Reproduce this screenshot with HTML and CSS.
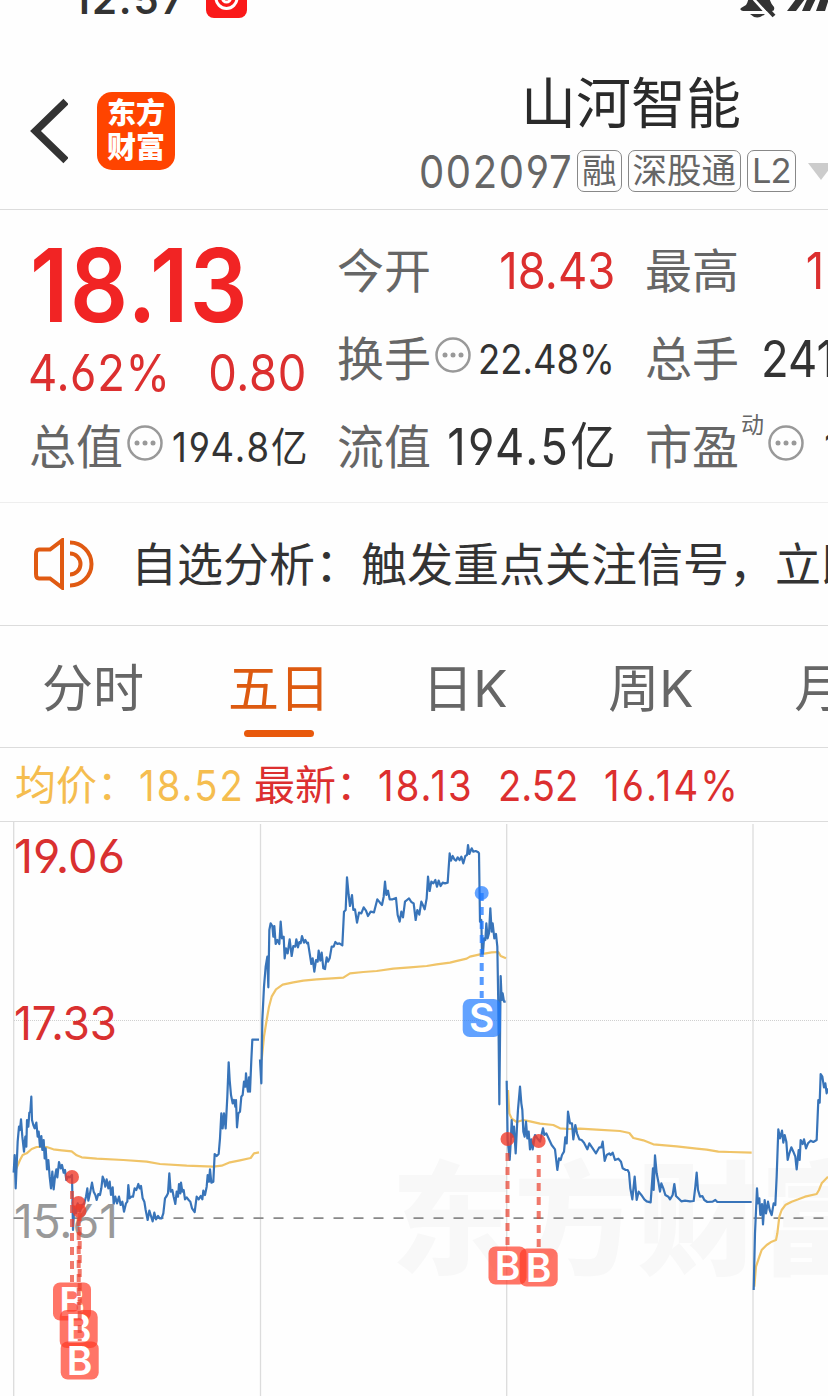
FILE: index.html
```
<!DOCTYPE html>
<html lang="zh-CN">
<head>
    <meta charset="utf-8">
    <title>山河智能 002097</title>
    <link rel="stylesheet" href="styles.css">
</head>
<body>
    <div class="status-bar">
        <span class="clock">12:57</span>
        <svg class="status-app" width="41" height="41" viewBox="0 0 41 41">
            <rect width="41" height="41" rx="8" fill="#fa1919"/>
            <circle cx="20.500" cy="21" r="10.500" fill="none" stroke="#fff" stroke-width="3"/>
            <circle cx="20.500" cy="21" r="4" fill="none" stroke="#fff" stroke-width="3"/>
        </svg>
        <svg class="status-icons" width="88" height="40" viewBox="0 0 88 40">
            <path d="M6 27 C11 20 8 3 18 2 C30 3 25 19 34 29 Q35 33 32 33 H3 Q-1 32 1 30 Z" fill="#333"/>
            <path d="M10 36 H25 Q17 43 10 36 Z" fill="#333"/>
            <path d="M3 9 L31 40" stroke="#fff" stroke-width="3"/>
            <path d="M5 7 L34 38" stroke="#333" stroke-width="4"/>
            <path d="M47 33 L59 17 H68 L56 33 Z M62 33 L72 10 H81 L70 33 Z M76 33 L86 5 H94 L85 33 Z" fill="#333"/>
        </svg>
    </div>

    <div class="header">
        <svg class="back" width="38" height="66" viewBox="0 0 38 66">
            <path d="M36 3.500 L5.500 33 L36 62.500" fill="none" stroke="#333" stroke-width="7.500" stroke-linejoin="miter"/>
        </svg>
        <div class="logo"><span>东方</span><span>财富</span></div>
        <div class="title">
            <div class="stock-name">山河智能</div>
            <div class="stock-info">
                <span class="code"><span class="num">002097</span></span>
                <span class="tag">融</span>
                <span class="tag">深股通</span>
                <span class="tag level">L2</span>
                <span class="arrow"></span>
            </div>
        </div>
    </div>

    <div class="quote">
        <div class="column">
            <div class="price"><span class="num">18.13</span></div>
            <div class="change"><span class="num">4.62%</span><span class="num right">0.80</span></div>
            <div class="stat">
                <span class="label">总值</span>
                <svg class="more" viewBox="0 0 36 36"><use href="#more"/></svg>
                <span class="value small num right wide">194.8亿</span>
            </div>
        </div>
        <div class="column">
            <div class="stat">
                <span class="label">今开</span>
                <span class="value num right red">18.43</span>
            </div>
            <div class="stat">
                <span class="label">换手</span>
                <svg class="more" viewBox="0 0 36 36"><use href="#more"/></svg>
                <span class="value small num right">22.48%</span>
            </div>
            <div class="stat">
                <span class="label">流值</span>
                <span class="value num right wide">194.5亿</span>
            </div>
        </div>
        <div class="column">
            <div class="stat">
                <span class="label">最高</span>
                <span class="value num right red wide">19.06</span>
            </div>
            <div class="stat">
                <span class="label">总手</span>
                <span class="value num right">241.4万</span>
            </div>
            <div class="stat">
                <span class="label">市盈<sup>动</sup></span>
                <svg class="more" viewBox="0 0 36 36"><use href="#more"/></svg>
                <span class="value small num right">114.31</span>
            </div>
        </div>
    </div>

    <div class="news">
        <svg class="speaker" width="62" height="52" viewBox="0 0 62 52">
            <path d="M5 11.500 H16 L28 2.500 V49.500 L16 40.500 H5 Q2 40.500 2 36 V16 Q2 11.500 5 11.500 Z"/>
            <path d="M36 4.500 A21.500 21.500 0 0 1 36 47.500 M36 15.500 A10.500 10.500 0 0 1 36 36.500"/>
        </svg>
        <span>自选分析：触发重点关注信号，立即查看</span>
    </div>

    <div class="tabs">
        <div class="tab">分时</div>
        <div class="tab active">五日</div>
        <div class="tab">日K</div>
        <div class="tab">周K</div>
        <div class="tab">月K</div>
    </div>

    <div class="legend">
        <span class="average">均价：</span>
        <span class="average num wide">18.52</span>
        <span>最新：</span>
        <span class="num wide">18.13</span>
        <span class="num">2.52</span>
        <span class="num wide">16.14%</span>
    </div>

    <svg class="chart" width="828" height="574" viewBox="0 822 828 574">
        <defs>
            <g id="more">
                <circle cx="18" cy="18" r="16.500" fill="none" stroke="#999" stroke-width="2.500"/>
                <circle cx="10" cy="18" r="2.500" fill="#999"/>
                <circle cx="18" cy="18" r="2.500" fill="#999"/>
                <circle cx="26" cy="18" r="2.500" fill="#999"/>
            </g>
            <g id="buy">
                <rect x="-19" y="-19" width="38" height="38" rx="7"/>
                <text y="14" text-anchor="middle">B</text>
            </g>
        </defs>

        <text class="watermark" x="391" y="1265">东方财富</text>

        <!-- grid -->
        <path class="grid" d="M13.700 822 V1396 M260.500 824 V1396 M506.700 824 V1396 M753 824 V1396"/>
        <path class="grid-dotted" d="M14 1020.500 H828"/>
        <path class="base-line" d="M13.500 1218.200 H828"/>

        <!-- day 1 -->
        <g transform="translate(0 1080) scale(.33333)">
            <polyline class="avg" points="47,270 60,240 68,225 80,220 95,207 110,201 140,201 160,208 185,211 215,214 230,226 245,232 290,236 370,240 440,245 480,252 560,257 640,260 665,257 690,247 720,241 752,234 762,220 777,217"/>
            <polyline class="line" points="41,278 44,225 47,325 53,185 57,140 60,150 63,118 67,170 72,215 76,170 79,200 81,120 85,140 88,98 91,95 94,50 96,120 100,135 104,145 109,128 113,170 116,155 120,200 124,168 127,210 131,180 134,235 137,205 141,268 145,240 149,290 153,325 157,275 161,328 165,290 169,268 172,292 177,246 182,265 186,255 191,278 195,270 199,300 204,290 210,292 216,285 219,450 223,380 228,400 233,370 240,395 246,375 252,372 258,350 262,325 265,362 270,340 276,308 281,335 286,345 290,360 295,342 300,345 304,325 308,290 312,300 316,320 320,298 325,325 329,305 333,345 338,322 341,372 346,350 351,370 357,350 362,375 367,365 372,395 378,370 382,365 385,315 389,355 394,350 399,350 404,325 409,330 415,312 419,325 423,318 428,355 433,365 437,390 443,420 448,392 452,405 458,424 463,398 468,418 474,408 479,415 485,415 490,400 495,355 500,348 504,340 508,280 512,335 517,330 521,350 526,372 530,335 534,350 537,312 541,340 543,308 547,335 551,330 555,358 560,352 566,360 571,365 576,385 584,396 590,350 596,358 602,348 607,358 610,332 615,345 620,320 623,285 627,305 630,268 634,308 640,305 644,222 650,228 656,222 660,175 664,100 668,145 672,100 677,145 682,50 686,-53 689,0 693,45 698,70 702,60 706,80 708,60 711,142 715,100 720,95 724,50 728,45 732,5 736,20 738,-20 741,15 744,35 747,-8 750,35 754,-60 757,-121 777,-121"/>
        </g>

        <!-- day 2 -->
        <g transform="translate(250 820) scale(.33333)">
            <polyline class="avg" points="35,720 42,650 50,600 57,560 65,530 78,508 98,494 130,487 160,482 200,478 280,473 300,460 340,456 380,453 430,446 480,442 530,438 560,433 600,428 615,424 650,416 660,410 690,403 725,397 745,396 752,408 768,415"/>
            <polyline class="line" points="30,718 34,790 37,600 42,500 47,440 52,410 55,502 58,330 62,310 67,318 70,350 73,318 77,372 82,360 88,372 92,305 96,355 101,350 104,415 108,385 113,400 119,358 125,408 130,378 136,380 139,358 144,382 148,366 152,370 156,348 162,368 166,360 171,370 174,368 179,400 184,432 188,415 193,455 198,420 203,425 206,392 211,422 215,398 220,445 225,447 230,412 234,425 239,415 245,380 251,380 256,366 262,372 268,370 277,376 282,275 287,270 291,172 296,225 300,258 306,225 310,270 315,268 321,308 327,278 334,280 341,262 348,272 354,288 362,275 372,277 382,238 390,248 396,255 401,230 405,185 409,225 414,212 419,238 428,238 438,234 443,285 449,305 454,275 459,292 465,245 471,240 477,235 484,246 491,250 497,300 502,270 508,284 514,245 520,258 524,268 530,235 534,170 539,213 544,185 550,190 556,180 561,200 566,182 572,198 578,188 585,190 593,188 599,100 603,122 608,108 613,118 618,122 623,112 629,120 634,110 640,130 646,108 651,105 654,75 658,102 665,85 670,95 677,93 685,97 687,100 690,305 694,300 696,400 699,400 702,355 706,360 709,310 713,355 717,340 721,265 725,335 728,310 733,355 738,342 742,380 745,560 748,853 752,468 755,540 758,520 762,545 767,545"/>
        </g>

        <!-- day 3 -->
        <g transform="translate(440 1060) scale(.33333)">
            <polyline class="avg" points="204,90 208,160 215,176 230,186 250,180 270,184 300,191 340,195 360,205 385,207 420,206 470,209 540,213 568,219 580,234 610,241 640,253 710,259 770,266 800,269 835,275 870,276 935,278"/>
            <polyline class="line" points="200,62 203,240 209,300 212,250 215,180 218,230 222,200 227,280 231,200 234,148 240,80 244,130 247,150 250,215 254,230 258,185 262,235 266,215 270,268 274,238 278,268 285,225 292,235 300,245 309,205 313,225 319,220 328,240 335,255 345,268 352,330 357,295 362,300 366,285 372,275 376,232 380,250 384,155 390,190 396,190 400,238 406,195 411,220 418,238 425,240 432,248 442,268 448,250 456,262 468,280 478,262 484,262 488,245 494,303 500,285 508,280 512,285 518,278 525,300 535,296 543,305 548,325 557,330 563,330 567,338 571,385 577,418 584,350 590,420 596,395 604,405 613,418 620,424 632,427 639,325 641,390 645,286 650,340 655,365 660,395 664,370 670,385 676,405 685,410 690,418 698,405 703,372 708,408 718,418 724,424 735,422 750,424 761,423 766,380 770,338 774,390 780,410 787,408 793,420 802,426 818,425 826,420 832,426 935,426"/>
        </g>

        <!-- day 4 -->
        <g transform="translate(620 1060) scale(.33333)">
            <polyline class="avg" points="403,680 408,620 418,590 425,570 440,555 455,545 468,540 472,520 478,470 485,450 497,434 515,425 535,418 555,410 590,402 597,390 605,370 624,350"/>
            <polyline class="line" points="401,690 405,520 411,385 414,430 418,415 421,465 426,432 429,493 434,420 438,460 444,425 449,450 455,465 461,430 466,435 470,350 475,208 480,235 486,212 490,248 494,225 499,245 503,300 508,280 514,262 520,275 526,290 530,328 536,270 539,300 542,240 548,252 552,238 558,265 564,250 572,242 580,246 590,240 595,120 599,128 602,42 607,50 612,82 616,70 620,100 624,85"/>
        </g>

        <!-- price axis -->
        <text class="axis" x="14" y="873" textLength="111" lengthAdjust="spacingAndGlyphs">19.06</text>
        <text class="axis" x="14" y="1040" textLength="103" lengthAdjust="spacingAndGlyphs">17.33</text>
        <text class="axis base" x="14" y="1238" textLength="104" lengthAdjust="spacingAndGlyphs">15.61</text>

        <!-- sell point -->
        <g class="sell">
            <circle cx="481.700" cy="893" r="7"/>
            <path d="M481.700 893 V998"/>
            <rect x="462.700" y="999" width="38" height="38" rx="7"/>
            <text x="481.700" y="1032" text-anchor="middle">S</text>
        </g>

        <!-- buy points -->
        <g class="buy">
            <circle cx="72" cy="1177" r="7"/>
            <circle cx="78.500" cy="1203" r="7"/>
            <circle cx="79.500" cy="1211" r="7"/>
            <circle cx="507.500" cy="1139" r="7"/>
            <circle cx="538.700" cy="1141" r="7"/>
            <use href="#buy" x="72" y="1301.500"/>
            <path d="M72 1191 V1282"/>
            <use href="#buy" x="78.700" y="1329"/>
            <path d="M78.700 1204 V1310"/>
            <use href="#buy" x="79.700" y="1360.500"/>
            <path d="M79.700 1213 V1341"/>
            <use href="#buy" x="507.500" y="1265.500"/>
            <path d="M507.500 1153 V1247"/>
            <use href="#buy" x="538.700" y="1267.500"/>
            <path d="M538.700 1155 V1249"/>
        </g>
    </svg>
</body>
</html>
```

FILE: styles.css
```
body {
    margin: 0;
    width: 828px;
    height: 1396px;
    overflow: hidden;
    background-color: #fefefe;
    color: #333;
    font-family: Inter, "Noto Sans CJK SC", sans-serif;
    font-feature-settings: "cv03", "cv04";
    white-space: nowrap;
}

svg {
    display: block;
    flex-shrink: 0;
}

/* Condensed digits */
.num {
    display: inline-block;
    transform: scaleX(0.89);
    transform-origin: left center;
}

.num.right {
    transform-origin: right center;
}

.num.wide {
    letter-spacing: 0.055em;
}

.num.wide.right {
    margin-right: -0.055em;
}

.status-bar {
    display: flex;
    height: 60px;
    overflow: hidden;
}

.clock {
    width: 133px;
    margin-top: -25px;
    padding-left: 73px;
    font-size: 40px;
    font-weight: 600;
    letter-spacing: 2px;
    line-height: 50px;
}

.status-app {
    margin-top: -23px;
}

.status-icons {
    margin-top: -22px;
    margin-left: 493px;
}

.header {
    display: flex;
    height: 149px;
    border-bottom: 1px solid #dcdcdc;
}

.back {
    margin: 38px 0 0 30px;
}

.logo {
    display: flex;
    flex-direction: column;
    flex-shrink: 0;
    align-items: center;
    justify-content: center;
    width: 78px;
    height: 78px;
    margin: 32px 0 0 29px;
    border-radius: 15px;
    background-color: #ff4400;
    color: #fff;
    font-size: 29px;
    font-weight: 900;
    line-height: 34px;
}

.title {
    margin-left: 244px;
}

.stock-name {
    height: 85px;
    margin-left: 102px;
    font-size: 55px;
    line-height: 86px;
    color: #2a2a2a;
}

.stock-info {
    display: flex;
    align-items: center;
    gap: 6px;
    height: 52px;
    color: #666;
}

.code {
    width: 152px;
    font-size: 45px;
    letter-spacing: 1.800px;
}

.tag {
    padding: 0 4px;
    border: 1px solid #888;
    border-radius: 7px;
    font-size: 34.500px;
    line-height: 40px;
}

.tag.level {
    letter-spacing: -1px;
}

.arrow {
    margin-left: 6px;
    border: 13px solid transparent;
    border-top: 17px solid #ccc;
    border-bottom: 0;
}

.quote {
    display: grid;
    grid-template-columns: repeat(3, 277px);
    column-gap: 31px;
    height: 275px;
    padding: 17px 0 0 30px;
    border-bottom: 1px solid #eee;
}

.stat {
    display: flex;
    align-items: center;
    height: 88px;
}

.label {
    margin-left: -1px;
    font-size: 47px;
    line-height: 50px;
    color: #666;
}

.label:has(+ .value) {
    margin-right: -25px;
}

.label sup {
    font-size: 23px;
    line-height: 0;
    vertical-align: 31px;
    margin-left: 2px;
}

.more {
    width: 36px;
    height: 36px;
    margin: -8px -25px 0 4px;
}

.value {
    margin-left: auto;
    font-size: 51px;
    line-height: 50px;
}

.value.small {
    font-size: 41px;
}

.red {
    color: #dc2f2f;
}

.price {
    height: 117px;
    font-size: 102px;
    font-weight: 600;
    letter-spacing: 1.700px;
    line-height: 117px;
    color: #f12424;
}

.change {
    display: flex;
    justify-content: space-between;
    height: 59px;
    margin-left: -2px;
    font-size: 51px;
    letter-spacing: 0.700px;
    line-height: 57px;
    color: #dc2f2f;
}

.news {
    display: flex;
    align-items: center;
    height: 122px;
    padding-left: 34px;
    border-bottom: 1px solid #dcdcdc;
    font-size: 46px;
    line-height: 50px;
}

.speaker {
    margin-right: 35px;
    fill: none;
    stroke: #e05a12;
    stroke-width: 4;
}

.tabs {
    display: flex;
    height: 121px;
    border-bottom: 1px solid #dcdcdc;
}

.tab {
    display: flex;
    flex-direction: column;
    align-items: center;
    flex: 0 0 186px;
    font-size: 51px;
    line-height: 126px;
    color: #666;
}

.tab.active {
    color: #dd5a10;
}

.tab.active::after {
    content: "";
    width: 70px;
    height: 7px;
    margin-top: -22px;
    border-radius: 4px;
    background-color: #e8590c;
}

.legend {
    display: grid;
    grid-template-columns: 124px 115px 124px 120px 106px auto;
    height: 73px;
    padding-left: 15px;
    border-bottom: 1px solid #dcdcdc;
    font-size: 41px;
    line-height: 75px;
    color: #dc2f2f;
}

.legend .num {
    font-size: 43px;
}

.legend .average {
    color: #f5bd4f;
}

/* Chart */
.watermark {
    font-family: "Noto Sans CJK SC", sans-serif;
    font-size: 123px;
    font-weight: 900;
    fill: #f8f8f8;
}

.grid {
    stroke: #dcdcdc;
    stroke-width: 1.300;
}

.grid-dotted {
    stroke: #d0d0d0;
    stroke-dasharray: 1 1;
}

.base-line {
    stroke: #888;
    stroke-width: 1.800;
    stroke-dasharray: 10 10;
}

.line,
.avg {
    fill: none;
    stroke: #3874b9;
    stroke-width: 6.600;
    stroke-linejoin: round;
}

.avg {
    stroke: #f0c468;
}

.axis {
    font-size: 47px;
    fill: #d93030;
}

.axis.base {
    fill: #999;
}

.sell text {
    fill: #fff;
    font-size: 39px;
    font-weight: 600;
}

.sell circle,
.sell rect {
    fill: #1f7aff;
    fill-opacity: 0.7;
}

.sell path {
    stroke: #1f7aff;
    stroke-opacity: 0.75;
    stroke-width: 4;
    stroke-dasharray: 8 6;
}

.buy circle {
    fill: #f03b2a;
    fill-opacity: 0.8;
}

#buy rect {
    fill: #ff3b26;
    fill-opacity: 0.7;
}

#buy text {
    fill: #fff;
    font-size: 39px;
    font-weight: 600;
}

.buy path {
    stroke: #e9402e;
    stroke-opacity: 0.7;
    stroke-width: 4;
    stroke-dasharray: 8 6;
}
```
